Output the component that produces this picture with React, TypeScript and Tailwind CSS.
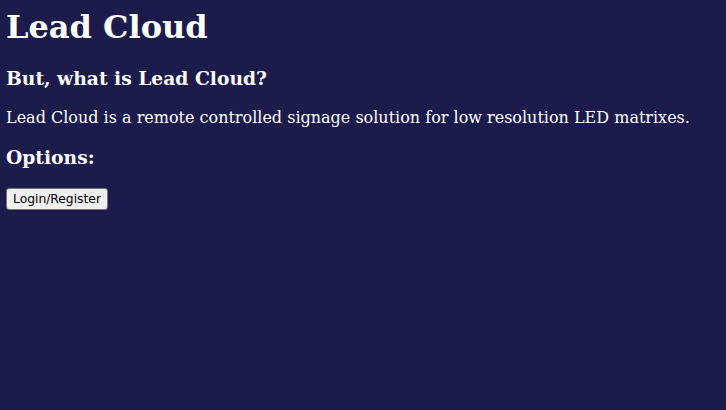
export default function App() {
  return (
    <div className="min-h-screen bg-[#1c1c4c] py-2 pl-[6px] pr-2 text-white font-['DejaVu_Serif',serif]">
      <h1 className="text-[32px] font-bold leading-[normal] mb-[21.44px]">Lead Cloud</h1>
      <h3 className="text-[18.72px] font-bold leading-[normal] my-[18.72px]">But, what is Lead Cloud?</h3>
      <p className="text-base leading-[normal] my-4">
        Lead Cloud is a remote controlled signage solution for low resolution LED matrixes.
      </p>
      <h3 className="text-[18.72px] font-bold leading-[normal] my-[18.72px]">Options:</h3>
      <div className="flex pt-px">
        <button className="bg-[#efefef] text-black border border-[#767676] rounded-[3px] px-[6px] py-[3px] text-[12.3px] font-['DejaVu_Sans',sans-serif] leading-[normal]">
          Login/Register
        </button>
      </div>
    </div>
  );
}
